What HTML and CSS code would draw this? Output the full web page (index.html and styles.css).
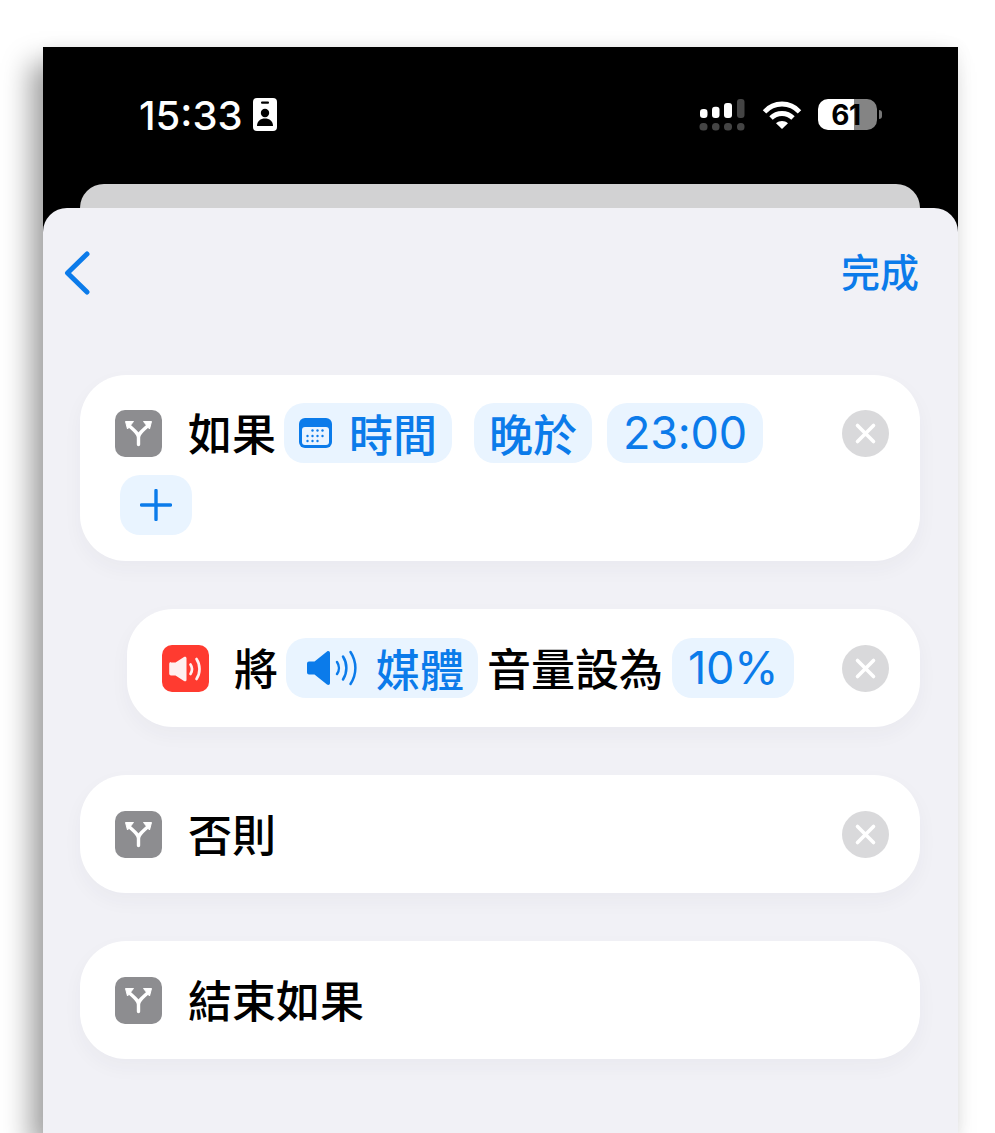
FILE: index.html
```html
<!DOCTYPE html>
<html lang="zh-Hant">
<head>
<meta charset="utf-8">
<title>捷徑</title>
<link rel="stylesheet" href="styles.css">
</head>
<body>
<svg class="defs" width="0" height="0" aria-hidden="true">
  <symbol id="branch" viewBox="0 0 47 47">
    <path d="M23.500 34.500V27.500C23.500 23.500 20.500 21.500 14.500 16M23.500 27.500C23.500 23.500 26.500 21.500 32.500 16" fill="none" stroke="#fff" stroke-width="3.400" stroke-linecap="round"/>
    <path d="M10.500 11.500L18.500 11.500L12.500 19ZM36.500 11.500L28.500 11.500L34.500 19Z" fill="#fff" stroke="#fff" stroke-width="1" stroke-linejoin="round"/>
  </symbol>
  <symbol id="cross" viewBox="0 0 47 47">
    <circle cx="23.500" cy="23.500" r="23.500" fill="#d9d9db"/>
    <path d="M15.500 15.500L31.500 31.500M31.500 15.500L15.500 31.500" stroke="#fff" stroke-width="3.600" stroke-linecap="round"/>
  </symbol>
</svg>
<div class="phone">
  <header class="status">
    <div class="status-left">
      <span class="clock">15:33</span>
      <svg class="badge" viewBox="0 0 24 33"><rect width="24" height="33" rx="4" fill="#fff"/><rect x="8" y="3.500" width="8" height="2.200" rx="1" fill="#000"/><circle cx="12" cy="15" r="4.200" fill="#000"/><path d="M4 28c0-5 3.500-7.500 8-7.500s8 2.500 8 7.500z" fill="#000"/></svg>
    </div>
    <div class="status-right">
      <svg class="signal" viewBox="0 0 46 32">
        <rect x="1" y="10" width="7.500" height="9" rx="3.200" fill="#fff"/>
        <rect x="13" y="7.700" width="7.500" height="11.300" rx="3" fill="#fff"/>
        <rect x="25" y="4" width="8" height="15" rx="3" fill="#fff"/>
        <rect x="38" y="0" width="7.500" height="19" rx="3" fill="#444"/>
        <g fill="#444"><rect x="0.500" y="24" width="8" height="7.500" rx="3.500"/><rect x="13" y="24" width="7.500" height="7.500" rx="3.500"/><rect x="25" y="24" width="8" height="7.500" rx="3.500"/><rect x="38" y="24" width="7.500" height="7.500" rx="3.500"/></g>
      </svg>
      <svg class="wifi" viewBox="0 0 40 27" preserveAspectRatio="none">
        <g fill="none" stroke="#fff" stroke-width="4.800">
          <path d="M2.500 10.500C12 .5 28 .5 37.500 10.500"/>
          <path d="M9 16.500C15 10.500 25 10.500 31 16.500"/>
        </g>
        <path d="M14 21.500C17.500 18.500 22.500 18.500 26 21.500L20 27Z" fill="#fff"/>
      </svg>
      <div class="battery"><span class="battery-level">61</span></div>
      <span class="battery-tip"></span>
    </div>
  </header>
  <div class="back-card"></div>
  <main class="sheet">
    <nav class="nav">
      <svg class="chevron" viewBox="0 0 26 44"><path d="M23 3L3.500 22L23 41" fill="none" stroke="#0b7bea" stroke-width="5" stroke-linecap="round" stroke-linejoin="round"/></svg>
      <span class="done">完成</span>
    </nav>

    <section class="card card-first">
      <div class="flow">
        <svg class="app-icon grey"><use href="#branch"/></svg>
        <span class="word">如果</span>
        <span class="token token-time">
          <svg class="cal" viewBox="0 0 33 30">
            <rect width="33" height="30" rx="6" fill="#0b7bea"/>
            <rect x="3" y="9" width="27" height="18" rx="3" fill="#eaf4ff"/>
            <g fill="#0b7bea"><circle cx="13.500" cy="12.500" r="1.200"/><circle cx="18.500" cy="12.500" r="1.200"/><circle cx="23.500" cy="12.500" r="1.200"/><circle cx="8.500" cy="18" r="1.200"/><circle cx="13.500" cy="18" r="1.200"/><circle cx="18.500" cy="18" r="1.200"/><circle cx="23.500" cy="18" r="1.200"/><circle cx="8.500" cy="23" r="1.200"/><circle cx="13.500" cy="23" r="1.200"/><circle cx="18.500" cy="23" r="1.200"/></g>
          </svg>
          時間
        </span>
        <span class="token token-later">晚於</span>
        <span class="token token-clock">23:00</span>
        <span class="token token-plus"><svg class="plus" viewBox="0 0 32 32"><path d="M16 1.500V30.500M1.500 16H30.500" stroke="#0b7bea" stroke-width="3.400" stroke-linecap="round"/></svg></span>
      </div>
      <svg class="close"><use href="#cross"/></svg>
    </section>

    <section class="card card-nested">
      <div class="flow">
        <svg class="app-icon red" viewBox="0 0 47 47">
          <path d="M9 17.500h4.500L22 12c1.200-.8 2.500-.2 2.500 1.200v21.600c0 1.400-1.300 2-2.500 1.200l-8.500-5.500H9a1.800 1.800 0 0 1-1.800-1.800v-9.900a1.800 1.800 0 0 1 1.800-1.800z" fill="#fff" opacity=".93"/>
          <path d="M28.500 19.500c2 3 2 6.500 0 9.500M34.500 14c4 6 4 14 0 20" fill="none" stroke="#fff" stroke-width="2.700" stroke-linecap="round" opacity=".93"/>
        </svg>
        <span class="word word-set">將</span>
        <span class="token token-media">
          <svg class="speaker" viewBox="0 0 51 34">
            <path d="M2 10.500h5.500L20 .5c1.500-1 3-.2 3 1.500v30c0 1.700-1.500 2.500-3 1.500L7.500 23.500H2a2 2 0 0 1-2-2v-9a2 2 0 0 1 2-2z" fill="#0b7bea"/>
            <path d="M30 11c2.500 3.500 2.500 8.500 0 12M36 5.500c4.500 7 4.500 16 0 23M43.500 1c6.500 10 6.500 22 0 32" fill="none" stroke="#0b7bea" stroke-width="2.500" stroke-linecap="round"/>
          </svg>
          媒體
        </span>
        <span class="word word-volume">音量設為</span>
        <span class="token token-percent">10%</span>
      </div>
      <svg class="close"><use href="#cross"/></svg>
    </section>

    <section class="card">
      <div class="flow">
        <svg class="app-icon grey"><use href="#branch"/></svg>
        <span class="word">否則</span>
      </div>
      <svg class="close"><use href="#cross"/></svg>
    </section>

    <section class="card">
      <div class="flow">
        <svg class="app-icon grey"><use href="#branch"/></svg>
        <span class="word">結束如果</span>
      </div>
    </section>
  </main>
</div>
</body>
</html>
```

FILE: styles.css
```css
* { box-sizing: border-box; }

html, body {
  margin: 0;
  height: 1133px;
  overflow: hidden;
  background: #fff;
}

body {
  padding: 47px 37px 0 43px;
  font-family: "Noto Sans CJK TC", "Noto Sans", sans-serif;
  color: #000;
}

.defs { display: block; }

.phone {
  height: 1086px;
  display: flex;
  flex-direction: column;
  background: #000;
  box-shadow: -13px 16px 26px rgba(0, 0, 0, .36), 2px -1px 16px rgba(0, 0, 0, .04);
}

/* status bar */
.status {
  height: 137px;
  flex: none;
  display: flex;
  justify-content: space-between;
  padding: 51px 76px 0 96px;
}

.status-left { display: flex; align-items: flex-start; gap: 10px; }

.clock {
  font-family: Inter, "Liberation Sans", sans-serif;
  font-size: 40px;
  line-height: 36px;
  font-weight: 500;
  color: #fff;
}

.badge { width: 24px; height: 33px; }

.status-right { display: flex; align-items: flex-start; }

.signal { width: 46px; height: 32px; margin: 1px 17px 0 0; }

.wifi { width: 40px; height: 28px; margin: 3px 16px 0 0; }

.battery {
  width: 59px;
  height: 31px;
  margin-top: 1px;
  border-radius: 10px;
  background: linear-gradient(to right, #fff 0 61%, #848484 61% 100%);
  display: flex;
  justify-content: center;
  font-family: Inter, "Liberation Sans", sans-serif;
  font-size: 28px;
  line-height: 33px;
  font-weight: 700;
  color: #000;
}

.battery-level { letter-spacing: -0.5px; margin-left: -3px; }

.battery-tip {
  width: 3px;
  height: 9px;
  margin: 12px 0 0 2px;
  border-radius: 0 3px 3px 0;
  background: #777;
}

.back-card {
  height: 24px;
  flex: none;
  margin: 0 38px 0 37px;
  border-radius: 24px 24px 0 0;
  background: #d2d2d3;
}

/* sheet */
.sheet {
  flex: 1;
  padding: 0 38px 0 37px;
  border-radius: 24px 24px 0 0;
  background: #f1f1f6;
  display: flex;
  flex-direction: column;
  gap: 48px;
}

.nav {
  height: 119px;
  padding: 43px 1px 0 0;
  margin-left: -16px;
  display: flex;
  justify-content: space-between;
  align-items: flex-start;
}

.chevron { width: 26px; height: 44px; }

.done {
  font-size: 39px;
  line-height: 38px;
  font-weight: 500;
  color: #0b7bea;
}

/* cards */
.card {
  display: flex;
  align-items: flex-start;
  min-height: 118px;
  padding: 29px 31px 29px 35px;
  border-radius: 46px;
  background: #fff;
  box-shadow: 0 8px 20px rgba(40, 40, 70, .04);
}

.card-first { padding: 28px 31px 26px 35px; }

.card-nested { margin-left: 47px; }

.app-icon {
  width: 47px;
  height: 47px;
  flex: none;
  margin-right: 26px;
  border-radius: 10px;
}

.grey { background: #8d8d90; }
.red { background: #ff3b30; }

.close {
  width: 47px;
  height: 47px;
  flex: none;
  margin-top: 7px;
  margin-left: 16px;
}

.flow {
  flex: 1;
  display: flex;
  flex-wrap: wrap;
  align-items: center;
  row-gap: 12px;
}

.word {
  font-size: 44px;
  line-height: 58px;
  height: 60px;
  font-weight: 500;
  margin-right: 8px;
}

.word-set { margin-left: -1px; margin-right: 8px; }
.word-volume { margin-right: 9px; margin-left: -1px; }

.token {
  height: 60px;
  display: inline-flex;
  align-items: center;
  border-radius: 20px;
  background: #e9f4ff;
  color: #0b7bea;
  font-size: 44px;
  line-height: 58px;
  font-weight: 500;
  padding: 0 15px;
  white-space: nowrap;
}

.token-time { margin-right: 22px; }
.cal { width: 33px; height: 30px; margin-right: 17px; }
.token-later { margin-right: 15px; }

.token-clock, .token-percent {
  font-family: Inter, "Liberation Sans", sans-serif;
  font-size: 45px;
  font-weight: 400;
  letter-spacing: -.2px;
  padding: 0 16px;
}

.token-plus {
  width: 72px;
  margin-left: 5px;
  justify-content: center;
  padding: 0;
}

.plus { width: 32px; height: 32px; }

.token-media { padding: 0 14px 0 21px; margin-right: 10px; }
.speaker { width: 51px; height: 34px; margin-right: 18px; overflow: visible; }
```
